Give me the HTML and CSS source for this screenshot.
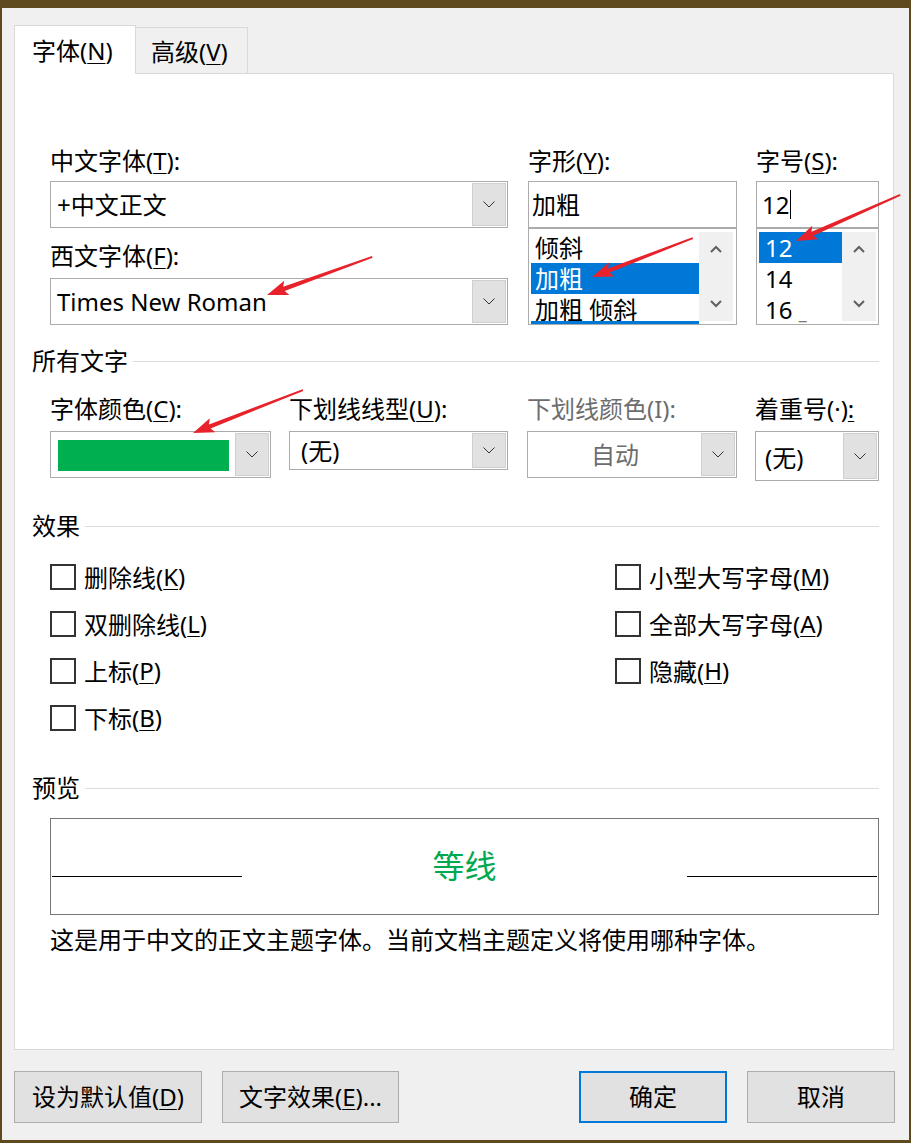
FILE: index.html
```html
<!DOCTYPE html>
<html lang="zh-CN">
<head>
<meta charset="utf-8">
<title>字体</title>
<link rel="stylesheet" href="styles.css">
</head>
<body>
<div class="dialog">
  <div class="tabs">
    <div class="tab tab-active">字体(<u>N</u>)</div>
    <div class="tab tab-other">高级(<u>V</u>)</div>
  </div>
  <div class="panel">
    <div class="font-row">
      <div class="col col-name">
        <div class="label">中文字体(<u>T</u>):</div>
        <div class="combo combo-a">
          <span class="val">+中文正文</span>
          <span class="dd"><svg width="12" height="7" viewBox="0 0 12 7"><path d="M0.5 0.5 L6 6 L11.5 0.5" fill="none" stroke="#333" stroke-width="1"/></svg></span>
        </div>
        <div class="label label-2">西文字体(<u>F</u>):</div>
        <div class="combo combo-b">
          <span class="val">Times New Roman</span>
          <span class="dd"><svg width="12" height="7" viewBox="0 0 12 7"><path d="M0.5 0.5 L6 6 L11.5 0.5" fill="none" stroke="#333" stroke-width="1"/></svg></span>
        </div>
      </div>
      <div class="col col-style">
        <div class="label">字形(<u>Y</u>):</div>
        <div class="textbox">加粗</div>
        <div class="listbox list-style">
          <div class="items">
            <div class="item">倾斜</div>
            <div class="item sel">加粗</div>
            <div class="item item-last">加粗 倾斜</div>
            <div class="strip"></div>
          </div>
          <div class="scroll">
            <span class="sbtn"><svg width="12" height="8" viewBox="0 0 12 8"><path d="M1 7 L6 2 L11 7" fill="none" stroke="#606060" stroke-width="2"/></svg></span>
            <span class="sbtn"><svg width="12" height="8" viewBox="0 0 12 8"><path d="M1 1 L6 6 L11 1" fill="none" stroke="#606060" stroke-width="2"/></svg></span>
          </div>
        </div>
      </div>
      <div class="col col-size">
        <div class="label">字号(<u>S</u>):</div>
        <div class="textbox textbox-size">12<span class="caret"></span></div>
        <div class="listbox list-size">
          <div class="items">
            <div class="item sel">12</div>
            <div class="item">14</div>
            <div class="item">16 <span class="ghost">_</span></div>
          </div>
          <div class="scroll">
            <span class="sbtn"><svg width="12" height="8" viewBox="0 0 12 8"><path d="M1 7 L6 2 L11 7" fill="none" stroke="#606060" stroke-width="2"/></svg></span>
            <span class="sbtn"><svg width="12" height="8" viewBox="0 0 12 8"><path d="M1 1 L6 6 L11 1" fill="none" stroke="#606060" stroke-width="2"/></svg></span>
          </div>
        </div>
      </div>
    </div>

    <div class="section sec-all"><span>所有文字</span><span class="rule"></span></div>

    <div class="attr-row">
      <div class="col col-color">
        <div class="label">字体颜色(<u>C</u>):</div>
        <div class="combo combo-color">
          <span class="swatch"></span>
          <span class="dd"><svg width="12" height="7" viewBox="0 0 12 7"><path d="M0.5 0.5 L6 6 L11.5 0.5" fill="none" stroke="#333" stroke-width="1"/></svg></span>
        </div>
      </div>
      <div class="col col-uline">
        <div class="label">下划线线型(<u>U</u>):</div>
        <div class="combo combo-uline">
          <span class="val">(无)</span>
          <span class="dd"><svg width="12" height="7" viewBox="0 0 12 7"><path d="M0.5 0.5 L6 6 L11.5 0.5" fill="none" stroke="#333" stroke-width="1"/></svg></span>
        </div>
      </div>
      <div class="col col-ucolor">
        <div class="label disabled">下划线颜色(I):</div>
        <div class="combo combo-ucolor">
          <span class="val val-center disabled">自动</span>
          <span class="dd"><svg width="12" height="7" viewBox="0 0 12 7"><path d="M0.5 0.5 L6 6 L11.5 0.5" fill="none" stroke="#333" stroke-width="1"/></svg></span>
        </div>
      </div>
      <div class="col col-emph">
        <div class="label">着重号(·)<u>:</u></div>
        <div class="combo combo-emph">
          <span class="val">(无)</span>
          <span class="dd"><svg width="12" height="7" viewBox="0 0 12 7"><path d="M0.5 0.5 L6 6 L11.5 0.5" fill="none" stroke="#333" stroke-width="1"/></svg></span>
        </div>
      </div>
    </div>

    <div class="section sec-fx"><span>效果</span><span class="rule"></span></div>

    <div class="effects">
      <div class="fx-col fx-left">
        <div class="check"><span class="box"></span>删除线(<u>K</u>)</div>
        <div class="check"><span class="box"></span>双删除线(<u>L</u>)</div>
        <div class="check"><span class="box"></span>上标(<u>P</u>)</div>
        <div class="check"><span class="box"></span>下标(<u>B</u>)</div>
      </div>
      <div class="fx-col fx-right">
        <div class="check"><span class="box"></span>小型大写字母(<u>M</u>)</div>
        <div class="check"><span class="box"></span>全部大写字母(<u>A</u>)</div>
        <div class="check"><span class="box"></span>隐藏(<u>H</u>)</div>
      </div>
    </div>

    <div class="section sec-pv"><span>预览</span><span class="rule"></span></div>

    <div class="preview">
      <span class="pline"></span>
      <span class="ptext">等线</span>
      <span class="pline"></span>
    </div>
    <div class="desc">这是用于中文的正文主题字体。当前文档主题定义将使用哪种字体。</div>
  </div>

  <div class="buttons">
    <div class="btn btn-default">设为默认值(<u>D</u>)</div>
    <div class="btn btn-effects">文字效果(<u>E</u>)...</div>
    <div class="btn btn-ok">确定</div>
    <div class="btn btn-cancel">取消</div>
  </div>
</div>

<svg class="arrows" width="911" height="1143" viewBox="0 0 911 1143">
  <g fill="#e8222b">
    <g transform="translate(267 295) rotate(160.1)"><polygon points="0,0 -21,-7.5 -18,-2.2 -112,-0.9 -112,0.9 -18,2.2 -21,7.5"/></g>
    <g transform="translate(592 277) rotate(158.9)"><polygon points="0,0 -21,-7.5 -18,-2.2 -108,-0.9 -108,0.9 -18,2.2 -21,7.5"/></g>
    <g transform="translate(796 241) rotate(156.1)"><polygon points="0,0 -21,-7.5 -18,-2.2 -114,-0.9 -114,0.9 -18,2.2 -21,7.5"/></g>
    <g transform="translate(193 433) rotate(158.65)"><polygon points="0,0 -21,-7.5 -18,-2.2 -118,-0.9 -118,0.9 -18,2.2 -21,7.5"/></g>
  </g>
</svg>
</body>
</html>
```

FILE: styles.css
```css
* { box-sizing: border-box; }
html, body { margin: 0; padding: 0; }
body {
  width: 911px;
  height: 1143px;
  overflow: hidden;
  background: #5f4a1f;
  font-family: "Noto Sans", "Noto Sans CJK SC", sans-serif;
  font-size: 24px;
  color: #000;
  position: relative;
}
u { text-decoration: underline; text-underline-offset: 3px; text-decoration-thickness: 1px; }

.dialog {
  margin: 8px 2px 0 2px;
  width: 907px;
  height: 1132px;
  background: #f0f0f0;
  padding: 17px 14px 0 12px;
}

/* tabs */
.tabs { display: flex; align-items: flex-end; height: 48px; }
.tab {
  border: 1px solid #d9d9d9;
  border-bottom: none;
  white-space: nowrap;
}
.tab-active {
  width: 122px;
  height: 49px;
  margin-bottom: -1px;
  background: #fff;
  padding-left: 17px;
  line-height: 50px;
  position: relative;
  z-index: 1;
}
.tab-other {
  width: 112px;
  height: 46px;
  border-left: none;
  background: #f0f0f0;
  padding-left: 15px;
  line-height: 48px;
}

/* panel */
.panel {
  width: 880px;
  height: 977px;
  background: #fff;
  border: 1px solid #d9d9d9;
  padding: 72px 14px 0 17px;
}
.label { height: 30px; line-height: 30px; white-space: nowrap; }
.disabled { color: #6d6d6d; }

.font-row { display: flex; margin-left: 18px; }
.col { display: flex; flex-direction: column; }
.col-name { width: 458px; margin-right: 20px; }
.col-style { width: 209px; margin-right: 19px; }
.col-size { width: 123px; }

.combo {
  display: flex;
  height: 47px;
  padding: 1px;
  border: 1px solid #ababab;
  background: #fff;
  margin-top: 5px;
}
.label-2 { margin-top: 13px; }
.combo-b { margin-top: 7px; }
.combo .val { flex: 1; padding-left: 5px; line-height: 43px; white-space: nowrap; overflow: hidden; }
.combo .val-center { text-align: center; padding-left: 0; }
.dd {
  width: 34px;
  flex: none;
  background: #e1e1e1;
  border: 1px solid #cfcfcf;
  display: flex;
  align-items: center;
  justify-content: center;
}
.dd svg { display: block; }

.textbox {
  height: 47px;
  margin-top: 5px;
  border: 1px solid #ababab;
  background: #fff;
  padding-left: 3px;
  line-height: 45px;
  display: flex;
  align-items: center;
}
.textbox-size { padding-left: 5px; }
.caret { display: inline-block; width: 1px; height: 29px; background: #000; margin-left: 1px; }

.listbox {
  height: 97px;
  border: 1px solid #ababab;
  background: #fff;
  display: flex;
  padding: 3px 3px 0 2px;
}
.list-size { padding-right: 2px; }
.items { flex: 1; overflow: hidden; display: flex; flex-direction: column; }
.item { height: 31px; flex: none; line-height: 31px; padding-left: 4px; white-space: nowrap; }
.list-size .item { padding-left: 6px; }
.item.sel { background: #0078d7; color: #fff; }
.item-last { height: 27px; }
.strip { height: 3px; flex: none; background: #0078d7; }
.ghost { color: #777; font-size: 18px; }
.scroll {
  width: 34px;
  flex: none;
  height: 89px;
  background: #f0f0f0;
  display: flex;
  flex-direction: column;
  justify-content: space-between;
}
.sbtn { height: 34px; display: flex; align-items: center; justify-content: center; }
.sbtn svg { display: block; }

/* sections */
.section { display: flex; align-items: center; height: 30px; line-height: 30px; white-space: nowrap; }
.section .rule { flex: 1; height: 1px; background: #dcdcdc; margin-left: 5px; }
.sec-all { margin-top: 21px; }
.sec-fx { margin-top: 30px; }
.sec-pv { margin-top: 32px; }

/* attributes */
.attr-row { display: flex; margin-left: 18px; margin-top: 18px; align-items: flex-start; }
.attr-row .combo { margin-top: 7px; }
.col-color { width: 221px; margin-right: 18px; }
.col-uline { width: 219px; margin-right: 19px; }
.col-ucolor { width: 210px; margin-right: 18px; }
.col-emph { width: 124px; }
.combo-uline { height: 39px; }
.combo-uline .val { line-height: 35px; padding-left: 10px; }
.combo-emph { height: 50px; }
.combo-emph .val { line-height: 50px; padding-left: 8px; }
.combo-color { padding: 1px 1px 1px 7px; align-items: stretch; }
.swatch { width: 171px; height: 31px; margin-top: 7px; background: #00b050; margin-right: 6px; }

/* effects */
.effects { display: flex; margin-left: 18px; margin-top: 12px; }
.fx-left { width: 565px; }
.check { height: 47px; display: flex; align-items: center; white-space: nowrap; }
.box { width: 26px; height: 26px; border: 2px solid #333; background: #fff; margin-right: 8px; flex: none; }

/* preview */
.preview {
  margin: 15px 0 0 18px;
  width: 829px;
  height: 97px;
  border: 1px solid #767676;
  display: flex;
  align-items: flex-start;
  padding: 0 1px;
}
.pline { width: 190px; height: 1px; background: #000; margin-top: 57px; flex: none; }
.ptext { flex: 1; text-align: center; color: #00a84f; font-size: 32px; line-height: 40px; margin-top: 27px; }
.desc { margin: 10px 0 0 18px; height: 30px; line-height: 30px; white-space: nowrap; }

/* buttons */
.buttons { display: flex; margin-top: 21px; width: 881px; }
.btn {
  height: 52px;
  line-height: 50px;
  background: #e1e1e1;
  border: 1px solid #adadad;
  text-align: center;
  white-space: nowrap;
}
.btn-default { width: 188px; margin-right: 20px; }
.btn-effects { width: 177px; }
.btn-ok { width: 148px; margin-left: auto; margin-right: 20px; border: 2px solid #0078d7; line-height: 48px; }
.btn-cancel { width: 148px; }

.arrows { position: absolute; left: 0; top: 0; pointer-events: none; }
```
